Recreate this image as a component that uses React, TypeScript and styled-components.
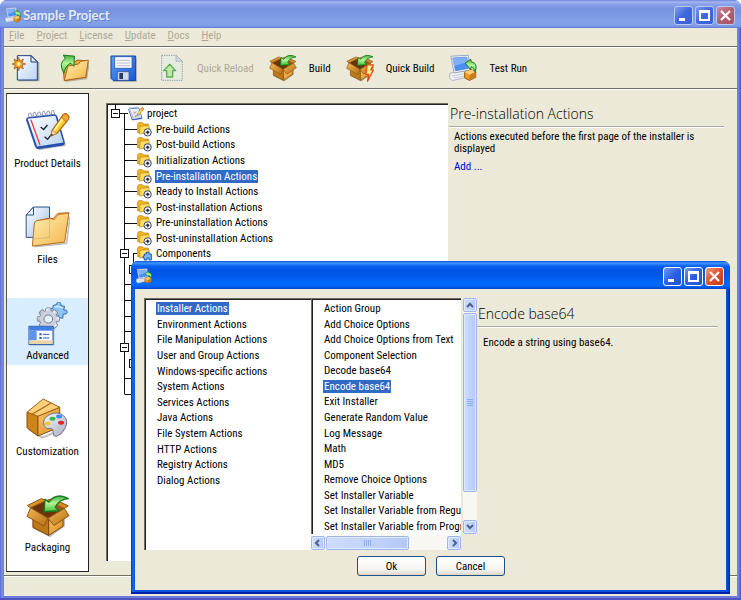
import React, { useState } from 'react';
import styled, { createGlobalStyle, css } from 'styled-components';

const face = '#ece9d8';
const highlight = '#316ac5';
const uiFont = '"Roboto Condensed", Roboto, "Liberation Sans", sans-serif';

const GlobalStyle = createGlobalStyle`
  *, *::before, *::after { box-sizing: border-box; }
  body { margin: 0; background: #fff; font: 11px/13px ${uiFont}; color: #000; }
  button { font: inherit; color: inherit; margin: 0; padding: 0; border: 0; background: none; }
  ul { list-style: none; margin: 0; padding: 0; }
  h1, h2, p { margin: 0; font-weight: 400; }
  svg { display: block; flex: none; }
`;

/* ---------- window frames ---------- */

const AppWindow = styled.div`
  position: relative;
  display: flex;
  flex-direction: column;
  height: 100vh;
  min-height: 600px;
  border-radius: 7px 7px 0 0;
  overflow: hidden;
  padding: 0 4px 4px;
  background: linear-gradient(90deg, #5d69d2 0, #7b8fe4 2px, #6c7bdd 4px, #6c7bdd calc(100% - 4px), #7b86e2 calc(100% - 3px), #4c54ba 100%);
  box-shadow: inset 0 -2px 0 #4e56bd;
`;

const Caption = styled.header<{ $active?: boolean }>`
  display: flex;
  align-items: center;
  flex: none;
  height: 28px;
  margin: 0 -4px;
  padding: 2px 6px 0 5px;
  gap: 2px;
  color: #e2eafb;
  font: 700 13px/18px Lato, "Open Sans", sans-serif;
  text-shadow: 1px 1px 0 #6a80c8;
  background: ${({ $active }) =>
    $active
      ? 'linear-gradient(#0a4fd0 0, #3f95ff 2px, #0b62f2 5px, #0054e3 9px, #0058ea 15px, #0369ff 22px, #0265fa 25px, #0043c9 28px)'
      : 'linear-gradient(#6f82d6 0, #a3b8f2 2px, #8aa2e8 4px, #7993de 8px, #7a96df 14px, #82a4e8 22px, #7e9be6 26px, #5f77d4 28px)'};
`;

const CaptionText = styled.h1`
  flex: 1;
  font: inherit;
`;

const CaptionButtons = styled.div`
  display: flex;
  gap: 2px;
`;

const captionTones = {
  soft: 'linear-gradient(135deg, #7c9cf0, #3f66dc 50%, #3d62d8)',
  softClose: 'linear-gradient(135deg, #cc8a9a, #b05f70 50%, #a55568)',
  blue: 'linear-gradient(135deg, #6e9bf5, #2a60e4 50%, #2450d0)',
  close: 'linear-gradient(135deg, #f09a7c, #e0512c 50%, #c63a14)',
};

const CaptionButton = styled.button<{ $tone: keyof typeof captionTones }>`
  width: 19px;
  height: 19px;
  border: 1px solid ${({ $tone }) => ($tone.startsWith('soft') ? '#b9c8f4' : '#fff')};
  border-radius: 3px;
  background: ${({ $tone }) => captionTones[$tone]};
`;

const DialogWindow = styled.section`
  position: absolute;
  left: 131px;
  right: 11px;
  top: 261px;
  display: flex;
  flex-direction: column;
  height: 333px;
  padding: 0 4px 4px;
  border-radius: 7px 7px 0 0;
  overflow: hidden;
  background: linear-gradient(90deg, #0831d9 0, #166aee 2px, #0855dd 4px, #0855dd calc(100% - 4px), #0444cc calc(100% - 2px), #001ea0 100%);
  box-shadow: inset 0 -2px 0 #0020a8;
`;

/* ---------- main window ---------- */

const MenuBar = styled.nav`
  display: flex;
  align-items: center;
  gap: 12px;
  flex: none;
  height: 19px;
  padding: 0 5px 3px;
  background: ${face};
  border-bottom: 1px solid #716f64;
  color: #aca899;
`;

const MenuItem = styled.button`
  &::first-letter { text-decoration: underline; }
`;

const Toolbar = styled.div`
  display: flex;
  align-items: center;
  flex: none;
  gap: 15px;
  height: 42px;
  padding: 0 8px;
  background: ${face};
  border-top: 1px solid #fff;
  border-bottom: 1px solid #716f64;
`;

const ToolGroup = styled.div`
  display: flex;
  gap: 20px;
`;

const ToolButton = styled.button`
  display: flex;
  align-items: center;
  gap: 12px;
  white-space: nowrap;
  &:disabled { color: #aca899; }
`;

const Workspace = styled.div`
  display: flex;
  flex: 1;
  min-height: 0;
  background: ${face};
  border-top: 1px solid #fff;
  padding: 3px 13px 3px 2px;
`;

const StatusBar = styled.footer`
  flex: none;
  height: 21px;
  background: ${face};
  border-top: 1px solid #716f64;
  box-shadow: inset 0 1px 0 #fff;
`;

const Sidebar = styled.nav`
  display: flex;
  flex-direction: column;
  justify-content: space-between;
  flex: none;
  width: 83px;
  padding: 12px 0 14px;
  border: 1px solid #222;
  border-left-color: #555;
  background: #fff;
`;

const SidebarItem = styled.button<{ $current: boolean }>`
  display: flex;
  flex-direction: column;
  align-items: center;
  justify-content: space-between;
  height: 67px;
  padding: 4px 0 3px;
  white-space: nowrap;
  background: ${({ $current }) => ($current ? '#d8edff' : 'transparent')};
`;

const sunken = css`
  background: #fff;
  border-top: 1px solid #716f64;
  border-left: 1px solid #716f64;
  box-shadow: inset 1px 1px 0 #222;
`;

const TreePanel = styled.div`
  ${sunken}
  position: relative;
  flex: none;
  width: 342px;
  margin: 10px 1px 11px 17px;
  padding: 2px 0 0 1px;
  overflow: hidden;
`;

const TreeLines = styled.svg`
  position: absolute;
  left: 1px;
  top: 0;
`;

const Rows = styled.ul<{ $height: number }>`
  position: relative;
  display: grid;
  grid-auto-rows: 1fr;
  height: ${({ $height }) => $height}px;
`;

const indents = { root: 3, leaf: 29, branch: 12, nested: 21 };

const TreeRow = styled.li<{ $kind: keyof typeof indents }>`
  display: flex;
  align-items: center;
  padding-left: ${({ $kind }) => indents[$kind]}px;
`;

const Expander = styled.button`
  position: relative;
  flex: none;
  width: 9px;
  height: 9px;
  margin-right: 8px;
  border: 1px solid #111;
  background: linear-gradient(#111, #111) center / 5px 1px no-repeat #fff;
`;

const RowLabel = styled.button<{ $selected?: boolean }>`
  height: 13px;
  padding: 0 1px;
  margin-left: 2px;
  white-space: nowrap;
  color: ${({ $selected }) => ($selected ? '#fff' : '#000')};
  background: ${({ $selected }) => ($selected ? highlight : 'transparent')};
`;

const Details = styled.section`
  flex: 1;
  min-width: 0;
`;

const DetailsTitle = styled.h2`
  padding: 0 0 2px 1px;
  font: 300 14px/20px "Open Sans", sans-serif;
  border-bottom: 1px solid #aca899;
  box-shadow: 0 1px 0 #fff;
`;

const DetailsText = styled.p`
  padding: 4px 5px;
  line-height: 12px;
`;

const AddLink = styled.a`
  display: block;
  padding: 1px 5px;
  color: #0000e0;
  text-decoration: none;
`;

const MainDetails = styled(Details)`
  padding-top: 11px;
`;

const DialogDetails = styled(Details)`
  padding-top: 6px;
`;

const DialogText = styled(DetailsText)`
  padding: 10px 6px;
`;

/* ---------- dialog ---------- */

const DialogBody = styled.div`
  display: flex;
  flex-direction: column;
  flex: 1;
  gap: 6px;
  padding: 9px 8px 0 9px;
  background: ${face};
`;

const Chooser = styled.div`
  display: grid;
  grid-template-columns: 167px 166px 1fr;
  height: 252px;
`;

const ListBox = styled.div`
  ${sunken}
  min-width: 0;
  padding: 2px 0 0 9px;
  overflow: hidden;
`;

const ListRow = styled.li`
  display: flex;
  align-items: center;
`;

const ScrollArea = styled.div`
  display: grid;
  grid-template: 236px 14px / 150px 14px;
  gap: 2px;
  background: linear-gradient(#fff, #fff) 0 0 / 150px 100% no-repeat;
`;

const ScrollBar = styled.div<{ $vertical?: boolean }>`
  display: flex;
  flex-direction: ${({ $vertical }) => ($vertical ? 'column' : 'row')};
  justify-content: space-between;
  gap: 1px;
  background: #f8f7f1;
`;

const blueControl = css`
  display: flex;
  align-items: center;
  justify-content: center;
  border: 1px solid #9fb5ec;
  border-radius: 2px;
  background: linear-gradient(90deg, #cdddfe, #c0d2fc 60%, #b4c8f6);
  box-shadow: inset 0 0 0 1px #dfe9ff;
`;

const ScrollButton = styled.button`
  ${blueControl}
  flex: none;
  width: 14px;
  height: 14px;
`;

const Thumb = styled.div<{ $length: number; $vertical?: boolean }>`
  ${blueControl}
  flex: 0 0 ${({ $length }) => $length}px;
  margin: ${({ $vertical }) => ($vertical ? '0 0 auto' : '0 auto 0 0')};
`;

const DialogButtons = styled.div`
  display: flex;
  justify-content: center;
  gap: 10px;
`;

const PushButton = styled.button`
  width: 69px;
  height: 20px;
  border: 1px solid #1d5087;
  border-radius: 3px;
  background: linear-gradient(#fff, #f5f4ee 70%, #dcd8cc);
`;

/* ---------- icons ---------- */

const Defs = () => (
  <svg width="0" height="0" aria-hidden="true">
    <defs>
      <linearGradient id="gGreen" x1="0" y1="0" x2="0" y2="1"><stop offset="0" stopColor="#3fae3a" /><stop offset=".45" stopColor="#b6f59a" /><stop offset="1" stopColor="#3cc23a" /></linearGradient>
      <linearGradient id="gFolder" x1="0" y1="0" x2="1" y2="1"><stop offset="0" stopColor="#fff0b4" /><stop offset="1" stopColor="#f3b548" /></linearGradient>
      <linearGradient id="gPaper" x1="0" y1="0" x2="1" y2="1"><stop offset="0" stopColor="#fff" /><stop offset="1" stopColor="#b9d3f2" /></linearGradient>
      <linearGradient id="gSheet" x1="0" y1="0" x2="1" y2="1"><stop offset="0" stopColor="#fff" /><stop offset="1" stopColor="#9dbfe8" /></linearGradient>
      <linearGradient id="gBox" x1="0" y1="0" x2="1" y2="1"><stop offset="0" stopColor="#fbc765" /><stop offset="1" stopColor="#d68a1c" /></linearGradient>
      <linearGradient id="gFlap" x1="0" y1="0" x2="1" y2="1"><stop offset="0" stopColor="#f2b851" /><stop offset="1" stopColor="#b56f16" /></linearGradient>
      <linearGradient id="gBlue" x1="0" y1="0" x2="1" y2="1"><stop offset="0" stopColor="#5ba0fa" /><stop offset="1" stopColor="#1c57d6" /></linearGradient>
      <linearGradient id="gGrey" x1="0" y1="0" x2="1" y2="1"><stop offset="0" stopColor="#f6f7fb" /><stop offset="1" stopColor="#a9afc2" /></linearGradient>
    </defs>
  </svg>
);

const DefsHolder = styled.div`
  height: 0;
  overflow: hidden;
`;

const BoxShape = () => (
  <g strokeLinejoin="round">
    <path d="M24 70 118 66V98L72 132 22 106Z" fill="#000" opacity=".25" />
    <path d="M20 60 68 78V126L20 102Z" fill="#bd7818" stroke="#7d430a" strokeWidth="3" />
    <path d="M68 78 112 58V98L68 126Z" fill="url(#gBox)" stroke="#7d430a" strokeWidth="3" />
    <path d="M13 42 60 20 116 44 66 74Z" fill="#6b330c" stroke="#7d430a" strokeWidth="3" />
    <path d="M60 20 116 44 94 57 60 42Z" fill="#9c5a18" />
    <path d="M13 42 3 35 46 14 60 20Z" fill="#d9952c" stroke="#8f5410" strokeWidth="3" />
    <path d="M60 20 80 14 128 36 116 44Z" fill="#d08a24" stroke="#8f5410" strokeWidth="3" />
    <path d="M13 42 66 74 54 98 2 68Z" fill="url(#gFlap)" stroke="#8f5410" strokeWidth="3" />
    <path d="M66 74 116 44 130 66 84 96Z" fill="url(#gFlap)" stroke="#8f5410" strokeWidth="3" />
    <path d="M54 54 57 16 69 25Q92-6 128 14 100 16 88 40L99 51Z" fill="url(#gGreen)" stroke="#147a1c" strokeWidth="4" />
  </g>
);

const PackageIcon = ({ size }: { size: number }) => (
  <svg width={size} height={size} viewBox="-1 0 134 134"><BoxShape /></svg>
);

const QuickBuildIcon = () => (
  <svg width="28" height="28" viewBox="-1 0 134 134">
    <BoxShape />
    <path d="M100 52H130L118 76H130L102 130 107 98H94Z" fill="#fff08a" stroke="#e0481c" strokeWidth="6" strokeLinejoin="round" />
  </svg>
);

const NotebookArt = () => (
  <g strokeLinejoin="round">
    <path d="M12 32 100 22 126 108 42 122Z" fill="#223" opacity=".3" />
    <path d="M4 28Q4 22 10 21L90 12Q96 12 98 18L121 98Q122 104 116 106L40 117Q34 117 32 111Z" fill="#2450b4" stroke="#1b3c98" strokeWidth="2" />
    <path d="M8 25 93 16 118 98 37 110Z" fill="url(#gPaper)" />
    <path d="M18 28 46 106" stroke="#ee3a3a" strokeWidth="4" fill="none" />
    <path d="M12 20q-4-14 5-13l6 14M26 18q-4-14 5-13l6 14M40 17q-4-14 5-13l6 14M54 15q-4-14 5-13l6 14M68 14q-4-14 5-13l6 14M82 12q-4-14 5-13l5 14" fill="none" stroke="#8593ae" strokeWidth="3" />
    <path d="M48 50 57 58 69 44M60 80 69 88 82 72" fill="none" stroke="#1b2030" strokeWidth="4" />
    <path d="M84 60 116 14Q122 6 130 12L134 17Q136 22 132 28L98 70 80 77Z" fill="#ffcf2c" stroke="#b56c10" strokeWidth="4" />
    <path d="M89 62 119 20" stroke="#fff09a" strokeWidth="6" />
    <path d="M116 14Q122 6 130 12L134 17Q136 22 132 28L126 34 112 20Z" fill="#f4a63a" stroke="#b56c10" strokeWidth="3" />
    <path d="M84 60 98 70 78 79Z" fill="#f8dcae" stroke="#a36a28" strokeWidth="2" />
    <path d="M82 71 86 75 77 79Z" fill="#222" />
  </g>
);

const ProductIcon = () => <svg width="45" height="41" viewBox="0 -2 138 126"><NotebookArt /></svg>;

const FilesIcon = () => (
  <svg width="45" height="42" viewBox="0 0 134 126" strokeLinejoin="round">
    <path d="M3 27 25 3H73V94H3Z" fill="url(#gSheet)" stroke="#2c4f88" strokeWidth="3" />
    <path d="M3 27H25V3Z" fill="#e9f2ff" stroke="#2c4f88" strokeWidth="3" />
    <path d="M28 122 124 112 134 34" fill="none" stroke="#000" opacity=".25" strokeWidth="5" />
    <path d="M22 120 28 52Q29 46 35 44L74 36 84 38 98 22 131 20 118 108Z" fill="#f6c45e" stroke="#b4641a" strokeWidth="3" />
    <path d="M22 120 28 52Q29 46 35 44L76 38 87 41 100 26 131 22 118 108Z" fill="url(#gFolder)" stroke="#b4641a" strokeWidth="2" />
    <path d="M73 41V94L26 99" fill="none" stroke="#b6a77c" strokeWidth="2" opacity=".8" />
  </svg>
);

const GearTeeth = ({ r, w }: { r: number; w: number }) => (
  <>
    {[0, 45, 90, 135].map(a => (
      <rect key={a} x={-w / 2} y={-r} width={w} height={r * 2} rx="3" transform={`rotate(${a})`} />
    ))}
  </>
);

const AdvancedIcon = () => (
  <svg width="40" height="44" viewBox="0 0 120 132">
    <path d="M76 10 86 8Q86-2 95 1 102 4 98 11L110 13 107 24Q118 22 118 31 117 38 106 36L104 49 92 46Q94 39 87 38 80 38 81 45L68 42 71 30Q63 31 64 23 67 16 74 20Z" fill="#8cc4f2" stroke="#356fae" strokeWidth="3" strokeLinejoin="round" />
    <path d="M79 15 90 13 104 18" stroke="#d2ebff" strokeWidth="5" fill="none" />
    <g transform="translate(61 51)">
      <g fill="#8c93a6" stroke="#7d8498" strokeWidth="3"><GearTeeth r={33} w={15} /><circle r="26" /></g>
      <g fill="url(#gGrey)"><GearTeeth r={32} w={13} /></g>
      <circle r="25" fill="#ccd0dc" />
      <ellipse rx="13" ry="12" fill="#e4f2ff" stroke="#767e92" strokeWidth="3" />
    </g>
    <rect x="5" y="77" width="74" height="54" fill="#000" opacity=".2" />
    <rect x="3" y="73" width="72" height="54" fill="#fff" stroke="#1d4ea6" strokeWidth="3" />
    <path d="M4 74H74V86H4Z" fill="#3f7fe6" />
    <path d="M4 86H26V115H4Z" fill="#5b94ec" />
    <path d="M4 115H74V126H4Z" fill="#ead6a4" />
    <path d="M34 94h7v6h-7zM34 105h7v6h-7z" fill="#2c58c8" />
    <path d="M45 97H64M45 108H64" stroke="#2c58c8" strokeWidth="3" />
  </svg>
);

const CustomizationIcon = () => (
  <svg width="43" height="41" viewBox="0 0 130 124" strokeLinejoin="round">
    <path d="M8 94 50 120 106 96" fill="none" stroke="#000" strokeWidth="6" opacity=".25" />
    <path d="M3 43 36 55V115L3 90Z" fill="#cf8417" stroke="#8a4c0c" strokeWidth="3" />
    <path d="M36 55 102 28V88L36 115Z" fill="url(#gBox)" stroke="#8a4c0c" strokeWidth="3" />
    <path d="M3 43 52 3 102 28 36 55Z" fill="#ffd07a" stroke="#a05f14" strokeWidth="3" />
    <path d="M18 49 76 15" fill="none" stroke="#a86a1c" strokeWidth="4" />
    <path d="M55 84Q48 62 70 51 96 38 114 54 130 69 118 92 108 112 92 116 82 117 82 106 84 92 74 92 62 96 55 84Z" fill="url(#gGrey)" stroke="#6c7388" strokeWidth="3" />
    <ellipse cx="80" cy="63" rx="9" ry="6" fill="#3bb53f" />
    <ellipse cx="100" cy="56" rx="9" ry="6" fill="#3a8df0" />
    <ellipse cx="106" cy="75" rx="9" ry="6" fill="#e2241c" />
    <ellipse cx="65" cy="77" rx="8" ry="6" fill="#f4c32e" />
  </svg>
);

const NewIcon = () => (
  <svg width="28" height="28" viewBox="0 0 84 84" strokeLinejoin="round">
    <path d="M20 80H80V24" stroke="#000" opacity=".3" strokeWidth="4" fill="none" />
    <path d="M16 5H58L76 23V78H16Z" fill="url(#gPaper)" stroke="#1c3f7c" strokeWidth="3" />
    <path d="M57 5V24H76Z" fill="#dbe9fb" stroke="#1c3f7c" strokeWidth="3" />
    <path d="M20 10 24 21 34 15 30 26 41 30 30 34 34 45 24 39 20 50 16 39 6 45 10 34 0 30 10 26 6 15 16 21Z" fill="#f59a22" stroke="#9c4b0a" strokeWidth="2" />
    <circle cx="20" cy="30" r="6" fill="#fff0a8" />
  </svg>
);

const OpenIcon = () => (
  <svg width="29" height="28" viewBox="0 0 88 84" strokeLinejoin="round">
    <path d="M16 82 80 74 88 24" stroke="#000" opacity=".25" strokeWidth="5" fill="none" />
    <path d="M13 80 8 30 38 28 52 18 84 20 78 70Z" fill="#e9aa3e" stroke="#a55d14" strokeWidth="3" />
    <path d="M13 80 24 36 56 30 62 22 86 18 78 70Z" fill="url(#gFolder)" stroke="#b4641a" strokeWidth="3" />
    <path d="M12 58Q-6 28 16 13L10 3 44 6 42 37 32 27Q16 36 12 58Z" fill="url(#gGreen)" stroke="#147a1c" strokeWidth="3" />
  </svg>
);

const SaveIcon = () => (
  <svg width="28" height="28" viewBox="0 0 84 84">
    <path d="M10 84H84V12" stroke="#000" opacity=".25" strokeWidth="3" fill="none" />
    <path d="M6 6H80V80H13L6 73Z" fill="url(#gBlue)" stroke="#123f9e" strokeWidth="3" />
    <path d="M17 8H69V43H17Z" fill="#f7f8fc" stroke="#1948ac" strokeWidth="2" />
    <path d="M23 19H63M23 27H63M23 35H63" stroke="#b9bfcc" strokeWidth="3" />
    <path d="M25 53H60V79H25Z" fill="#d3d8e6" stroke="#26488e" strokeWidth="2" />
    <path d="M31 57H42V75H31Z" fill="#22396c" />
  </svg>
);

const ReloadIcon = () => (
  <svg width="28" height="28" viewBox="0 0 84 84" strokeLinejoin="round">
    <path d="M14 4H58L76 22V79H14Z" fill="#e6ebdf" stroke="#8f9da3" strokeWidth="3" strokeDasharray="4 3" />
    <path d="M57 4V22H76Z" fill="#d3dce0" stroke="#a0abb0" strokeWidth="2" />
    <path d="M38 31 56 50H47V69H29V50H20Z" fill="#bfe9a8" stroke="#5fae54" strokeWidth="4" />
  </svg>
);

const RunArt = () => (
  <g strokeLinejoin="round">
    <path d="M2 60 50 54 60 72 12 84Q-2 82 0 70Z" fill="#f0f1f6" stroke="#a9aebc" strokeWidth="3" />
    <path d="M8 70 48 62M14 76 50 69" stroke="#c3c8d3" strokeWidth="3" />
    <path d="M4 6 60 3 67 50 14 60Z" fill="#f3f5fa" stroke="#9aa3b8" strokeWidth="3" />
    <path d="M10 12 55 9 61 45 19 53Z" fill="#4a8ff5" stroke="#3a6fd0" strokeWidth="2" />
    <path d="M10 12 55 9 57 25 14 38Z" fill="#fff" opacity=".3" />
    <path d="M48 58 68 48 84 56V74L64 84 48 76Z" fill="#e99a24" stroke="#9a5a12" strokeWidth="3" />
    <path d="M64 66 84 56V74L64 84Z" fill="#c97c16" />
    <path d="M48 58 68 48 84 56 64 66Z" fill="#ffcd76" />
    <path d="M50 28 68 16 70 24Q92 28 82 58 78 42 69 40L68 50Z" fill="url(#gGreen)" stroke="#147a1c" strokeWidth="3" />
  </g>
);

const RunIcon = ({ size }: { size: number }) => (
  <svg width={size} height={size} viewBox="-2 0 90 88"><RunArt /></svg>
);

const ProjectIcon = () => <svg width="16" height="15" viewBox="0 -2 138 126"><NotebookArt /></svg>;

const FolderIcon = ({ variant }: { variant: 'gear' | 'component' }) => (
  <svg width="16" height="15" viewBox="0 0 48 45" strokeLinejoin="round">
    <path d="M2 6 5 2H16L20 6H34V32H2Z" fill="#f4b51e" stroke="#b47a10" strokeWidth="2" />
    <path d="M9 13 36 11 38 32 8 36Z" fill="#ffdf62" stroke="#c08a18" strokeWidth="2" />
    {variant === 'gear' ? (
      <g transform="translate(32 31)">
        <circle r="11" fill="#f1f3f8" stroke="#39425a" strokeWidth="3" />
        <path d="M0-11V11M-11 0H11" stroke="#aab0c0" strokeWidth="3" />
        <circle r="4" fill="#1c2233" />
      </g>
    ) : (
      <path d="M22 24H28V19H36V24H43V42H36V36H30V42H22V36H18V30H22Z" fill="#7db6f4" stroke="#1c58b0" strokeWidth="3" />
    )}
  </svg>
);

const MinimizeGlyph = () => <svg width="17" height="17"><path d="M4 11H10V14H4Z" fill="#fff" /></svg>;
const MaximizeGlyph = () => (
  <svg width="17" height="17"><path d="M3 3H14V14H3ZM5 6V12H12V6Z" fill="#fff" fillRule="evenodd" /></svg>
);
const CloseGlyph = () => (
  <svg width="17" height="17"><path d="M4 4 13 13M13 4 4 13" stroke="#fff" strokeWidth="2.2" /></svg>
);

const chevrons = { up: 'M1 6 4 3 7 6', down: 'M1 2 4 5 7 2', left: 'M5 1 2 4 5 7', right: 'M3 1 6 4 3 7' };
const Chevron = ({ to }: { to: keyof typeof chevrons }) => (
  <svg width="8" height="8"><path d={chevrons[to]} fill="none" stroke="#4d6185" strokeWidth="2" /></svg>
);
const Grip = ({ vertical }: { vertical?: boolean }) => (
  <svg width="8" height="8">
    <path d={vertical ? 'M1 .5H7M1 2.5H7M1 4.5H7M1 6.5H7' : 'M.5 1V7M2.5 1V7M4.5 1V7M6.5 1V7'} stroke="#8eaaf0" />
  </svg>
);

/* ---------- data ---------- */

const sections = [
  { name: 'Product Details', icon: <ProductIcon /> },
  { name: 'Files', icon: <FilesIcon /> },
  { name: 'Advanced', icon: <AdvancedIcon /> },
  { name: 'Customization', icon: <CustomizationIcon /> },
  { name: 'Packaging', icon: <PackageIcon size={44} /> },
];

const phases = [
  'Pre-build Actions', 'Post-build Actions', 'Initialization Actions', 'Pre-installation Actions',
  'Ready to Install Actions', 'Post-installation Actions', 'Pre-uninstallation Actions', 'Post-uninstallation Actions',
];

const categories = [
  'Installer Actions', 'Environment Actions', 'File Manipulation Actions', 'User and Group Actions',
  'Windows-specific actions', 'System Actions', 'Services Actions', 'Java Actions', 'File System Actions',
  'HTTP Actions', 'Registry Actions', 'Dialog Actions',
];

const actions = [
  'Action Group', 'Add Choice Options', 'Add Choice Options from Text', 'Component Selection', 'Decode base64',
  'Encode base64', 'Exit Installer', 'Generate Random Value', 'Log Message', 'Math', 'MD5', 'Remove Choice Options',
  'Set Installer Variable', 'Set Installer Variable from Regu', 'Set Installer Variable from Progr',
];

/* ---------- parts ---------- */

const WindowButtons = ({ active }: { active?: boolean }) => (
  <CaptionButtons>
    <CaptionButton $tone={active ? 'blue' : 'soft'} aria-label="Minimize"><MinimizeGlyph /></CaptionButton>
    <CaptionButton $tone={active ? 'blue' : 'soft'} aria-label="Maximize"><MaximizeGlyph /></CaptionButton>
    <CaptionButton $tone={active ? 'close' : 'softClose'} aria-label="Close"><CloseGlyph /></CaptionButton>
  </CaptionButtons>
);

const Tree = () => {
  const [selected, setSelected] = useState('Pre-installation Actions');
  return (
    <TreePanel>
      <TreeLines width="60" height="300" fill="none" stroke="#111">
        <path d="M7.5 0V6M12 9.5H20M16.5 9V290M16.5 290.5H40M25.5 149V240M25 149.5H29M25.5 243V290" />
        <path d="M16 25.5H29M16 40.5H29M16 56.5H29M16 72.5H29M16 87.5H29M16 103.5H29M16 119.5H29M16 134.5H29M16 180.5H29M16 196.5H29M16 212.5H29M16 227.5H29M16 274.5H29" />
      </TreeLines>
      <Rows $height={296}>
        <TreeRow $kind="root"><Expander aria-label="Collapse project" /><ProjectIcon /><RowLabel>project</RowLabel></TreeRow>
        {phases.map(name => (
          <TreeRow key={name} $kind="leaf">
            <FolderIcon variant="gear" />
            <RowLabel $selected={name === selected} onClick={() => setSelected(name)}>{name}</RowLabel>
          </TreeRow>
        ))}
        <TreeRow $kind="branch"><Expander aria-label="Collapse components" /><FolderIcon variant="component" /><RowLabel>Components</RowLabel></TreeRow>
        <TreeRow $kind="nested"><Expander aria-label="Collapse" /></TreeRow>
        <TreeRow $kind="leaf" /><TreeRow $kind="leaf" /><TreeRow $kind="leaf" /><TreeRow $kind="leaf" />
        <TreeRow $kind="branch"><Expander aria-label="Collapse" /></TreeRow>
        <TreeRow $kind="nested"><Expander aria-label="Collapse" /></TreeRow>
        <TreeRow $kind="leaf" /><TreeRow $kind="leaf" />
      </Rows>
    </TreePanel>
  );
};

const PickList = ({ items, initial, height }: { items: string[]; initial: string; height: number }) => {
  const [selected, setSelected] = useState(initial);
  return (
    <ListBox>
      <Rows $height={height}>
        {items.map(name => (
          <ListRow key={name}>
            <RowLabel $selected={name === selected} onClick={() => setSelected(name)}>{name}</RowLabel>
          </ListRow>
        ))}
      </Rows>
    </ListBox>
  );
};

const ActionDialog = () => (
  <DialogWindow role="dialog" aria-label="Add action">
    <Caption $active><RunIcon size={16} /><CaptionText /><WindowButtons active /></Caption>
    <DialogBody>
      <Chooser>
        <PickList items={categories} initial="Installer Actions" height={187} />
        <ScrollArea>
          <PickList items={actions} initial="Encode base64" height={233} />
          <ScrollBar $vertical>
            <ScrollButton aria-label="Scroll up"><Chevron to="up" /></ScrollButton>
            <Thumb $length={179} $vertical><Grip vertical /></Thumb>
            <ScrollButton aria-label="Scroll down"><Chevron to="down" /></ScrollButton>
          </ScrollBar>
          <ScrollBar>
            <ScrollButton aria-label="Scroll left"><Chevron to="left" /></ScrollButton>
            <Thumb $length={83}><Grip /></Thumb>
            <ScrollButton aria-label="Scroll right"><Chevron to="right" /></ScrollButton>
          </ScrollBar>
        </ScrollArea>
        <DialogDetails>
          <DetailsTitle>Encode base64</DetailsTitle>
          <DialogText>Encode a string using base64.</DialogText>
        </DialogDetails>
      </Chooser>
      <DialogButtons><PushButton>Ok</PushButton><PushButton>Cancel</PushButton></DialogButtons>
    </DialogBody>
  </DialogWindow>
);

export default function App() {
  const [section, setSection] = useState('Advanced');
  return (
    <>
      <GlobalStyle />
      <DefsHolder><Defs /></DefsHolder>
      <AppWindow>
        <Caption><RunIcon size={16} /><CaptionText>Sample Project</CaptionText><WindowButtons /></Caption>
        <MenuBar>
          {['File', 'Project', 'License', 'Update', 'Docs', 'Help'].map(m => <MenuItem key={m}>{m}</MenuItem>)}
        </MenuBar>
        <Toolbar>
          <ToolGroup>
            <ToolButton aria-label="New"><NewIcon /></ToolButton>
            <ToolButton aria-label="Open"><OpenIcon /></ToolButton>
            <ToolButton aria-label="Save"><SaveIcon /></ToolButton>
            <ToolButton disabled><ReloadIcon />Quick Reload</ToolButton>
          </ToolGroup>
          <ToolButton><PackageIcon size={28} />Build</ToolButton>
          <ToolButton><QuickBuildIcon />Quick Build</ToolButton>
          <ToolButton><RunIcon size={28} />Test Run</ToolButton>
        </Toolbar>
        <Workspace>
          <Sidebar>
            {sections.map(s => (
              <SidebarItem key={s.name} $current={s.name === section} onClick={() => setSection(s.name)}>
                {s.icon}{s.name}
              </SidebarItem>
            ))}
          </Sidebar>
          <Tree />
          <MainDetails>
            <DetailsTitle>Pre-installation Actions</DetailsTitle>
            <DetailsText>Actions executed before the first page of the installer is displayed</DetailsText>
            <AddLink href="#add">Add ...</AddLink>
          </MainDetails>
        </Workspace>
        <StatusBar />
        <ActionDialog />
      </AppWindow>
    </>
  );
}
